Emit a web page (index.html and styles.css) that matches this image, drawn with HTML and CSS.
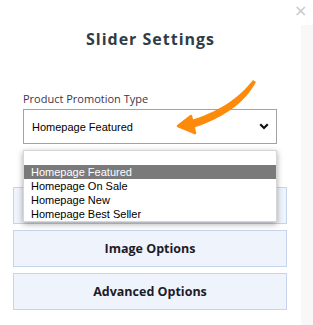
FILE: index.html
```html
<!DOCTYPE html>
<html>
<head>
<meta charset="utf-8">
<link rel="stylesheet" href="styles.css">
</head>
<body>
<div class="page">
  <div class="main">
    <h1 class="title">Slider Settings</h1>
    <div class="field">
      <div class="label">Product Promotion Type</div>
      <div class="select">
        <span class="select-text">Homepage Featured</span>
        <svg class="chev" width="10" height="7" viewBox="0 0 10 7"><path d="M2 2 L5 5 L8 2" fill="none" stroke="#111" stroke-width="2.2" stroke-linecap="square"/></svg>
      </div>
    </div>
    <div class="accordion">
      <div class="acc-item"></div>
      <div class="acc-item">Image Options</div>
      <div class="acc-item">Advanced Options</div>
    </div>
    <div class="dropdown">
      <div class="opt blank"></div>
      <div class="opt selected">Homepage Featured</div>
      <div class="opt">Homepage On Sale</div>
      <div class="opt">Homepage New</div>
      <div class="opt">Homepage Best Seller</div>
    </div>
    <svg class="arrow" width="301" height="150" viewBox="0 0 301 150">
      <path d="M253,80 C239,98 219,112 188,121 L190,129 C222,119 244,104 256,82 Z" fill="#fd8a0a"/>
      <path d="M178,126 L191,116 L195,133 Z" fill="#fd8a0a" stroke="#fd8a0a" stroke-width="2.5" stroke-linejoin="round"/>
    </svg>
  </div>
  <div class="strip"></div>
  <div class="close">×</div>
</div>
</body>
</html>
```
FILE: styles.css
```css
html, body {
  margin: 0;
  padding: 0;
  background: #fff;
}
.page {
  position: relative;
  display: flex;
  width: 313px;
  height: 325px;
  overflow: hidden;
}
.main {
  position: relative;
  width: 301px;
  padding-top: 28px;
  box-sizing: border-box;
}
.strip {
  width: 12px;
  margin-top: 25px;
  background: #f8f8f8;
}
.close {
  position: absolute;
  left: 294px;
  top: 0px;
  font-family: "DejaVu Sans", sans-serif;
  font-size: 16px;
  line-height: 22px;
  color: #c8c8c8;
}
.title {
  margin: 0;
  font-family: "Open Sans", sans-serif;
  font-weight: 700;
  font-size: 16px;
  line-height: 22px;
  letter-spacing: 1px;
  color: #303c46;
  text-align: center;
}
.field {
  margin: 41px 0 0 23px;
  width: 254px;
}
.label {
  font-family: "Open Sans", sans-serif;
  font-size: 11px;
  line-height: 15px;
  color: #41354a;
}
.select {
  margin-top: 3px;
  height: 35px;
  box-sizing: border-box;
  border: 1px solid #a3a3a3;
  display: flex;
  align-items: center;
  justify-content: space-between;
  padding: 0 7px 0 8px;
  font-family: "Liberation Sans", Arial, sans-serif;
  font-size: 11px;
  color: #000;
}
.chev {
  display: block;
}
.accordion {
  margin: 43px 0 0 13px;
  width: 274px;
  display: flex;
  flex-direction: column;
  gap: 6px;
}
.acc-item {
  height: 37px;
  box-sizing: border-box;
  border: 1px solid #c6d4ee;
  background: #eff3fb;
  display: flex;
  align-items: center;
  justify-content: center;
  font-family: "Open Sans", sans-serif;
  font-weight: 700;
  font-size: 12.5px;
  color: #1c1c28;
}
.dropdown {
  position: absolute;
  left: 23px;
  top: 150px;
  width: 254px;
  box-sizing: border-box;
  border: 1px solid #d6d6d6;
  background: #fff;
  box-shadow: 0 2px 6px rgba(0,0,0,0.35);
  font-family: "Liberation Sans", Arial, sans-serif;
  font-size: 11px;
  color: #000;
}
.opt {
  height: 14px;
  line-height: 14px;
  padding-left: 7px;
}
.opt.blank {
  height: 14px;
}
.opt.selected {
  background: #7a7a7a;
  color: #fff;
}
.arrow {
  position: absolute;
  left: 0;
  top: 0;
  pointer-events: none;
}
```
